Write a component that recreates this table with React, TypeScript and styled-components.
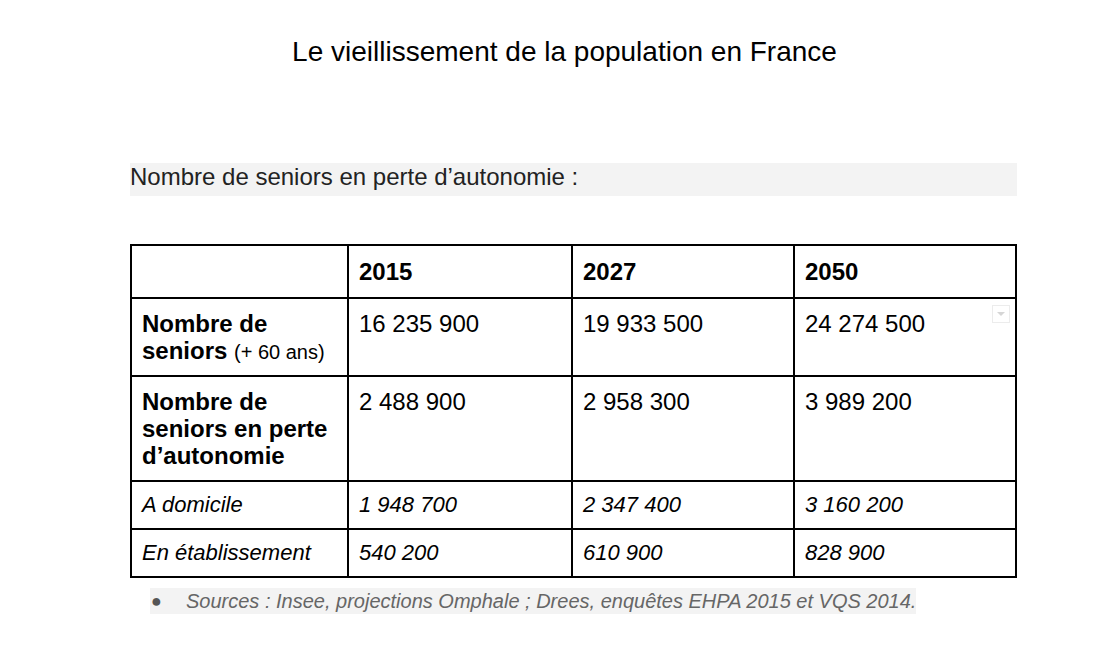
import React from 'react';
import styled, { createGlobalStyle } from 'styled-components';

const GlobalStyle = createGlobalStyle`
    html, body {
        margin: 0;
        padding: 0;
        background: #ffffff;
    }

    body {
        font-family: Arial, 'Liberation Sans', sans-serif;
        color: #000000;
    }
`;

const Page = styled.div`
    width: 1105px;
    height: 655px;
    overflow: hidden;
    padding: 36px 0 0 130px;
    box-sizing: border-box;
`;

const Doc = styled.div`
    width: 887px;
`;

const Title = styled.h1`
    margin: 0;
    padding-right: 18px;
    font-size: 28px;
    font-weight: 400;
    line-height: 1.15;
    text-align: center;
    color: #000;
`;

const Lead = styled.p`
    margin: 95px 0 0;
    height: 33px;
    box-sizing: border-box;
    padding-top: 2px;
    font-size: 24px;
    line-height: 24px;
    color: #222;
    background: #f3f3f3;
`;

const Table = styled.table`
    margin-top: 48px;
    width: 885px;
    table-layout: fixed;
    border-collapse: collapse;
`;

const Cell = styled.td<{ $italic?: boolean; $bold?: boolean; $head?: boolean }>`
    position: relative;
    border: 2px solid #000;
    padding: ${p => (p.$head ? '12px 10px' : '11px 10px')};
    vertical-align: top;
    font-size: ${p => (p.$italic ? '22px' : '24px')};
    font-style: ${p => (p.$italic ? 'italic' : 'normal')};
    font-weight: ${p => (p.$bold ? 700 : 400)};
    line-height: ${p => (p.$italic ? '24px' : '27px')};
    color: #000;
`;

const Small = styled.span`
    font-size: 20px;
    font-weight: 400;
    line-height: 1;
`;

const Dropdown = styled.span`
    position: absolute;
    top: 6px;
    right: 5px;
    width: 16px;
    height: 16px;
    border: 1px solid #ececec;
    background: #fff;
    display: flex;
    align-items: center;
    justify-content: center;

    &::after {
        content: '';
        border-left: 4px solid transparent;
        border-right: 4px solid transparent;
        border-top: 4px solid #d6d6d6;
    }
`;

const Sources = styled.div`
    margin-top: 10px;
    padding-left: 20px;
`;

const SourceLine = styled.span`
    display: inline-flex;
    align-items: center;
    height: 26px;
    background: #f3f3f3;
    color: #666;
    font-size: 20px;
    font-style: italic;
    line-height: 26px;
`;

const Bullet = styled.span`
    font-style: normal;
    font-size: 18px;
    color: #555;
    width: 35px;
    padding-left: 1px;
`;

type Row = {
    label: React.ReactNode;
    values: string[];
    italic?: boolean;
};

const rows: Row[] = [
    {
        label: (
            <>
                Nombre de seniors <Small>(+ 60 ans)</Small>
            </>
        ),
        values: ['16 235 900', '19 933 500', '24 274 500'],
    },
    {
        label: 'Nombre de seniors en perte d\u2019autonomie',
        values: ['2 488 900', '2 958 300', '3 989 200'],
    },
    { label: 'A domicile', values: ['1 948 700', '2 347 400', '3 160 200'], italic: true },
    { label: 'En établissement', values: ['540 200', '610 900', '828 900'], italic: true },
];

export default function App() {
    return (
        <Page>
            <GlobalStyle />
            <Doc>
                <Title>Le vieillissement de la population en France</Title>
                <Lead>Nombre de seniors en perte d’autonomie :</Lead>
                <Table>
                    <colgroup>
                        <col style={{ width: 217 }} />
                        <col style={{ width: 224 }} />
                        <col style={{ width: 222 }} />
                        <col style={{ width: 222 }} />
                    </colgroup>
                    <tbody>
                        <tr>
                            <Cell $head />
                            <Cell $head $bold>2015</Cell>
                            <Cell $head $bold>2027</Cell>
                            <Cell $head $bold>2050</Cell>
                        </tr>
                        {rows.map((row, i) => (
                            <tr key={i}>
                                <Cell $bold={!row.italic} $italic={row.italic}>
                                    {row.label}
                                </Cell>
                                {row.values.map((v, j) => (
                                    <Cell key={j} $italic={row.italic}>
                                        {v}
                                        {i === 0 && j === 2 && <Dropdown />}
                                    </Cell>
                                ))}
                            </tr>
                        ))}
                    </tbody>
                </Table>
                <Sources>
                    <SourceLine>
                        <Bullet>●</Bullet>
                        Sources : Insee, projections Omphale ; Drees, enquêtes EHPA 2015 et VQS 2014.
                    </SourceLine>
                </Sources>
            </Doc>
        </Page>
    );
}
